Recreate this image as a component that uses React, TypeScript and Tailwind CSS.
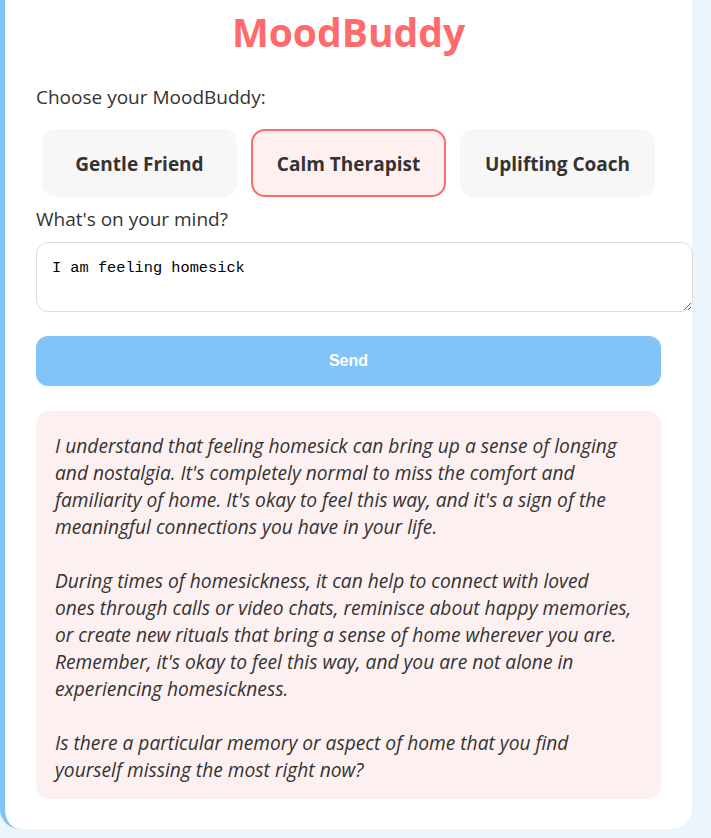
import { useState } from "react";

const modes = ["Gentle Friend", "Calm Therapist", "Uplifting Coach"];

const reply = `I understand that feeling homesick can bring up a sense of longing
and nostalgia. It's completely normal to miss the comfort and
familiarity of home. It's okay to feel this way, and it's a sign of the
meaningful connections you have in your life.

During times of homesickness, it can help to connect with loved
ones through calls or video chats, reminisce about happy memories,
or create new rituals that bring a sense of home wherever you are.
Remember, it's okay to feel this way, and you are not alone in
experiencing homesickness.

Is there a particular memory or aspect of home that you find
yourself missing the most right now?`;

export default function App() {
  const [mode, setMode] = useState("Calm Therapist");
  const [text, setText] = useState("I am feeling homesick");

  return (
    <div className="min-h-[838px] w-full bg-[#ecf5fc] pb-2 font-['Open_Sans',sans-serif] text-[#333]">
      <div className="w-[692px] rounded-b-[20px] border-l-[5px] border-[#82c4f8] bg-white px-[31px] pt-[5px] pb-[30px]">
        <h1 className="text-center text-[39px] font-bold leading-[54px] text-[#ff6b6b]">MoodBuddy</h1>

        <p className="mt-[25px] text-[19px] leading-[26px]">Choose your MoodBuddy:</p>

        <div className="mt-[19px] flex gap-[14px] px-[6px]">
          {modes.map((m) => (
            <button
              key={m}
              onClick={() => setMode(m)}
              className={
                m === mode
                  ? "h-[68px] flex-1 rounded-[14px] border-2 border-[#ff6b6b] bg-[#fff0f0] pt-[2px] text-[19px] font-bold"
                  : "h-[68px] flex-1 rounded-[14px] border-2 border-transparent bg-[#f7f7f7] pt-[2px] text-[19px] font-bold"
              }
            >
              {m}
            </button>
          ))}
        </div>

        <p className="mt-[9px] text-[19px] leading-[26px]">What's on your mind?</p>

        <textarea
          value={text}
          onChange={(e) => setText(e.target.value)}
          className="mt-[10px] box-content block h-[39px] w-full rounded-[12px] border border-[#ddd] px-[15px] pt-[15px] pb-[14px] font-['Liberation_Mono',monospace] text-[15.3px] leading-[20px] text-black"
        />

        <button
          disabled={!text}
          className="mt-[24px] block h-[50px] w-full rounded-[12px] bg-[#82c4f8] font-['Liberation_Sans',Arial,sans-serif] text-[16px] font-bold text-white"
        >
          Send
        </button>

        <div className="mt-[25px] whitespace-pre rounded-[14px] bg-[#fdf0f0] px-[19px] pt-[21px] pb-[16px] text-[19.2px] italic leading-[27px]">
          {reply}
        </div>
      </div>
    </div>
  );
}
